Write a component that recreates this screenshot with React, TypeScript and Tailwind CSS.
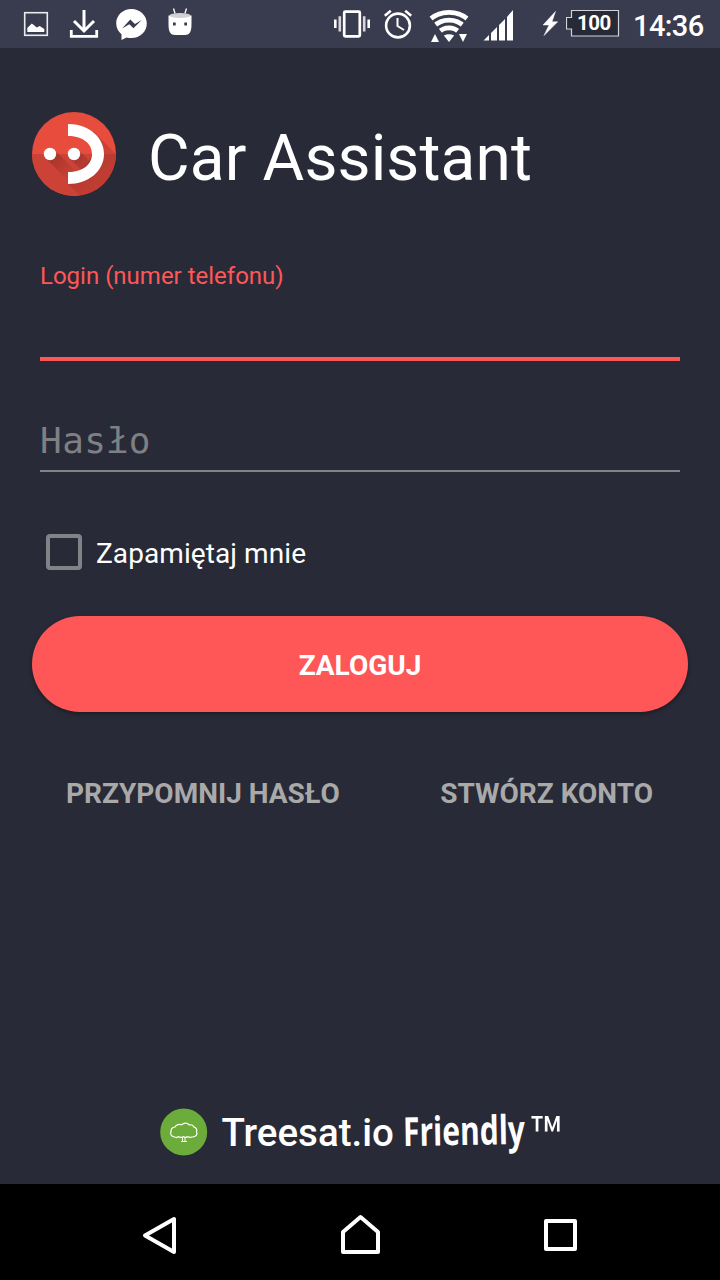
import React from 'react';

function StatusBar() {
  return (
    <header className="flex h-12 w-full shrink-0 bg-[#393b4e] text-white">
      <svg className="h-12 w-[320px]" viewBox="0 0 320 48" fill="none" stroke="white">
        <rect x="24.7" y="12.7" width="22.6" height="22.6" strokeWidth="1.6" strokeOpacity=".9" />
        <path d="M27.3 32v-4l4.5-4.5 2.6 2 2.3 2 3-1.5L44.3 29v3Z" fill="white" stroke="none" />
        <path d="M84 10v20M74 21l10 10 10-10" strokeWidth="3" />
        <path d="M71.3 30v6.4h25.4V30" strokeWidth="2.8" />
        <path d="M131.5 9c-8.5 0-15.3 6.2-15.3 14.3 0 4.6 2 8.3 5.3 11V40l5-2.5c1.5.4 3.2.6 5 .6 8.5 0 15.3-6.3 15.3-14.5S140 9 131.5 9Z" fill="white" stroke="none" />
        <path d="m122 28.5 8.3-8.9 4.6 4.3 6.9-4-8.4 8.3-4-4Z" fill="#393b4e" stroke="none" />
        <path d="m173.500 8.500 1.600 5M186.500 8.500l-1.600 5" strokeWidth="1.3" />
        <path d="M168.500 15.500h23v8c0 8.5-1.700 11.500-6.700 11.500h-9.600c-5 0-6.700-3-6.700-11.500Z" fill="white" stroke="none" />
        <ellipse cx="180" cy="15.4" rx="10.500" ry="2.500" fill="#d0d0d3" stroke="none" />
        <path d="M173 22.500h2.700v3H173zM184.300 22.500h2.700v3h-2.700z" fill="#393b4e" stroke="none" />
      </svg>
      <svg className="h-12 w-[220px]" viewBox="320 0 220 48" fill="none" stroke="white">
        <rect x="344.2" y="11.700" width="15.600" height="24.600" rx="1" strokeWidth="2.700" />
        <path d="M335.300 19.500V28M368.700 19.500V28" strokeWidth="2.600" />
        <path d="M339.800 16.300V31.500M364.200 16.300V31.500" strokeWidth="2.600" strokeOpacity=".8" />
        <circle cx="398" cy="25.500" r="11.900" strokeWidth="2.600" />
        <path d="M397.500 18v8l6.500 4" strokeWidth="2" />
        <path d="m384.800 15.800 6-5M411.200 15.800l-6-5" strokeWidth="2.600" />
        <clipPath id="wifi"><path d="m429.500 16.500 19.500 25.500 19.500-25.500V8h-39Z" /></clipPath>
        <g clipPath="url(#wifi)" strokeWidth="4.800">
          <circle cx="449" cy="42" r="29.600" />
          <circle cx="449" cy="42" r="21.800" />
          <circle cx="449" cy="42" r="14.200" />
        </g>
        <path d="M443.800 35.500q5.200-2.500 10.400 0L449 42Z" fill="white" stroke="none" />
        <path d="m431 42 4-8 4 8ZM459 34h8l-4 8Z" fill="white" stroke="none" />
        <path d="M483.500 40.500 489 35v5.500ZM491 33l6-6v13.500h-6ZM499 25l6-6v21.500h-6ZM507 17l6-7v30.500h-6Z" fill="white" stroke="none" />
      </svg>
      <svg className="h-12 w-[26px]" viewBox="540 0 26 48">
        <path d="m555.500 11.500-12.500 13.500h6l-5 10.500 13.700-13.700h-5.700Z" fill="white" stroke="white" strokeWidth=".5" />
      </svg>
      <div className="relative h-12 w-[54px]">
        <svg className="h-12 w-[54px]" viewBox="566 0 54 48">
          <path d="M571.500 10.500h47v25.500h-47v-7h-5V17.500h5Z" fill="#272936" stroke="#d2d3d8" strokeWidth="1.2" />
        </svg>
        <span className="absolute left-[11px] top-[11px] text-[20.500px] font-bold leading-6 tracking-[-0.5px]">100</span>
      </div>
      <span className="ml-[13px] mt-[6px] whitespace-nowrap text-[29px] font-medium leading-10 tracking-[-0.6px]">14:36</span>
    </header>
  );
}

function AppLogo() {
  return (
    <svg className="h-[84px] w-[84px] shrink-0" viewBox="0 0 84 84">
      <defs>
        <clipPath id="disc"><circle cx="42" cy="42" r="42" /></clipPath>
        <linearGradient id="shade" gradientUnits="userSpaceOnUse" x1="30" y1="30" x2="68" y2="68">
          <stop offset="0" stopColor="#7e251e" stopOpacity=".45" />
          <stop offset="1" stopColor="#982d25" stopOpacity=".25" />
        </linearGradient>
        <linearGradient id="dotShade" gradientUnits="userSpaceOnUse" x1="18" y1="42" x2="42" y2="66">
          <stop offset="0" stopColor="#7e251e" stopOpacity=".5" />
          <stop offset="1" stopColor="#7e251e" stopOpacity="0" />
        </linearGradient>
        <linearGradient id="midShade" gradientUnits="userSpaceOnUse" x1="42" y1="42" x2="62" y2="62">
          <stop offset="0" stopColor="#7e251e" stopOpacity=".5" />
          <stop offset="1" stopColor="#7e251e" stopOpacity="0" />
        </linearGradient>
      </defs>
      <g clipPath="url(#disc)">
        <path d="M0 0h84v84H0Z" fill="#e84c3c" />
        <path d="M0 42h84v42H0Z" fill="#cc4236" />
        <path d="m61 19 40 40v45H69L36 72V60c10 0 20-6 24-18Z" fill="url(#shade)" />
        <path d="m22.300 37.700 30 30-8.600 8.600-30-30Z" fill="url(#dotShade)" />
        <path d="m46.300 37.700 22 22-8.600 8.600-22-22Z" fill="url(#midShade)" />
      </g>
      <path d="M36 12c20.500 0 36 13 36 30S56.500 72 36 72V60c14 0 24-7 24-18s-10-18-24-18Z" fill="white" />
      <circle cx="18" cy="42" r="6.200" fill="white" />
      <circle cx="42" cy="42" r="6.200" fill="white" />
    </svg>
  );
}

function TreeBadge() {
  return (
    <svg className="h-[48px] w-[48px] shrink-0" viewBox="0 0 48 48" fill="none">
      <circle cx="23.700" cy="24" r="23.500" fill="#6cac3b" />
      <path d="M14.500 29c-3.500-.3-4.500-3-3.500-5.500-.1-3 2.500-4.300 4-4.500 1.200-2.500 4.500-3 6.500-2.200 2-2.200 6-2.300 7.500 0 2.500-.3 4.500.7 5 2.400 2.500.5 3.200 3 2.500 4.500 1.500 3-.8 5.300-4 5.300l-3 .3-2-.6-2 .8-2-.8-2.500.8-2.500-.8-2 .8Z" stroke="white" strokeWidth="1.200" />
      <path d="M22.500 29.500v4h-1.300m1.300 0h4m-1.500-4v4h1.700" stroke="white" strokeWidth="1" />
    </svg>
  );
}

function Navigation() {
  return (
    <nav className="flex h-24 shrink-0 items-center justify-between bg-black px-[140px]">
      <svg className="h-12 w-10" viewBox="140 1208 40 48" fill="none" stroke="white" strokeWidth="4" strokeLinejoin="round">
        <path d="M174 1219v33l-29-16.500Z" />
      </svg>
      <svg className="h-12 w-10" viewBox="340 1208 40 48" fill="none" stroke="white" strokeWidth="4" strokeLinejoin="round">
        <path d="M343 1252v-20l17.500-15 17.500 15v20Z" />
      </svg>
      <svg className="h-12 w-10" viewBox="540 1208 40 48" fill="none" stroke="white" strokeWidth="4" strokeLinejoin="round">
        <path d="M546 1221h29v28h-29Z" />
      </svg>
    </nav>
  );
}

export default function App() {
  return (
    <div className="flex h-[1280px] w-[720px] flex-col overflow-hidden bg-[#282a37] font-['Roboto',sans-serif] text-white">
      <StatusBar />
      <main className="flex flex-1 flex-col px-8">
        <div className="mt-16 flex h-[84px] items-center">
          <AppLogo />
          <h1 className="ml-8 mt-2.5 whitespace-nowrap text-[64px] font-normal leading-[76px] tracking-[0.12px]">Car Assistant</h1>
        </div>
        <div className="mx-2 mt-16 flex h-[101px] flex-col border-b-4 border-[#ff5757]">
          <label className="text-[24px] leading-8 text-[#ff5757]">Login (numer telefonu)</label>
        </div>
        <div className="mx-2 mt-[60px] h-[51px] border-b-2 border-[#828387] font-['DejaVu_Sans_Mono',monospace] text-[36px] leading-10 tracking-[0.5px] text-[#7f8083]">
          Has<span className="font-['Liberation_Mono',monospace]">ł</span>o
        </div>
        <label className="ml-3.5 mt-[62px] flex h-9 items-center text-[28px] leading-9">
          <span className="mr-3.5 h-9 w-9 rounded-[4px] border-4 border-[#828387]" />
          <span className="mt-[3px] tracking-[0.08px]">Zapamiętaj mnie</span>
        </label>
        <button className="mt-[46px] h-24 shrink-0 rounded-full bg-[#ff5757] pt-1 text-[28px] font-bold shadow-[0_2px_4px_rgba(0,0,0,0.35)]">ZALOGUJ</button>
        <div className="mt-[62px] flex items-center justify-between pl-[34px] pr-[35px] text-[28px] font-bold leading-10 text-[#a9a9a9]">
          <button>PRZYPOMNIJ HASŁO</button>
          <button>STWÓRZ KONTO</button>
        </div>
        <footer className="mb-7 ml-[127.500px] mt-auto flex h-[48px] items-center whitespace-nowrap">
          <TreeBadge />
          <span className="ml-[14px] mt-0.5 w-[181px] text-[38.500px] font-medium leading-[48px]">Treesat.io</span>
          <span className="mb-0.5 w-[126px] origin-left -rotate-1 scale-x-[0.75] font-['Open_Sans',sans-serif] text-[40px] font-bold leading-[48px]">Friendly</span>
          <span className="mt-3 text-[59px] leading-[48px]">™</span>
        </footer>
      </main>
      <Navigation />
    </div>
  );
}
